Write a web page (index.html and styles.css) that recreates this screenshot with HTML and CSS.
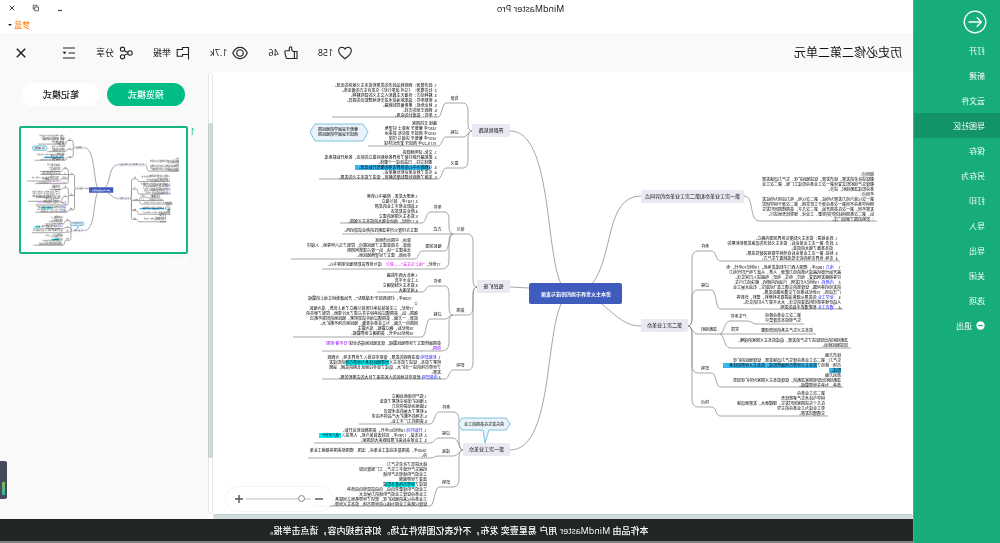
FILE: index.html
```html
<!DOCTYPE html>
<html lang="zh-CN">
<head>
<meta charset="utf-8">
<title>MindMaster Pro</title>
<link rel="stylesheet" href="styles.css">
</head>
<body>
<div class="app">
  <nav class="sidebar">
    <button class="back" aria-label="返回">
      <svg viewBox="0 0 24 24"><circle cx="12" cy="12" r="10.8"/><path d="M18.5 12H6M10.3 7.3 5.6 12l4.7 4.7"/></svg>
    </button>
    <a class="item" href="#">打开</a>
    <a class="item" href="#">新建</a>
    <a class="item" href="#">云文件</a>
    <a class="item active" href="#">导图社区</a>
    <a class="item" href="#">保存</a>
    <a class="item" href="#">另存为</a>
    <a class="item" href="#">打印</a>
    <a class="item" href="#">导入</a>
    <a class="item" href="#">导出</a>
    <a class="item" href="#">关闭</a>
    <a class="item" href="#">选项</a>
    <a class="item" href="#"><svg class="exit" viewBox="0 0 10 10"><circle cx="5" cy="5" r="4.6" fill="#fff"/><path d="M2.4 5h5.2" stroke="#17ad78" stroke-width="1.4"/></svg>退出</a>
  </nav>

  <div class="main">
    <div class="titlebar">
      <h1 class="app-name">MindMaster Pro</h1>
      <div class="window">
        <div class="window-buttons">
          <button aria-label="最小化"><svg viewBox="0 0 8 8"><path d="M2 6.5h4" stroke-width="1.2"/></svg></button>
          <button aria-label="还原"><svg viewBox="0 0 8 8"><path d="M1.5 3h3.8v3.8H1.5zM3 3V1.3h3.8v3.9H5.3" stroke-width=".8"/></svg></button>
          <button aria-label="关闭窗口"><svg viewBox="0 0 8 8"><path d="m1.7 1.7 4.6 4.6m0-4.6L1.7 6.3" stroke-width="1"/></svg></button>
        </div>
        <button class="account">梦蓝<span class="caret"></span></button>
      </div>
    </div>

    <header class="header">
      <h2 class="doc-title">历史必修二第二单元</h2>
      <div class="stats">
        <button class="tool"><svg viewBox="0 0 14 14"><path d="M7 12.7C4.6 11 .7 8 .7 4.8.7 2.700 2.200 1.200 4 1.200c1.300 0 2.400.7 3 1.900.6-1.200 1.700-1.900 3-1.900 1.800 0 3.300 1.500 3.300 3.600C13.300 8 9.400 11 7 12.700z"/></svg>158</button>
        <button class="tool"><svg viewBox="0 0 14 14"><path d="M1 5.500h2.600v7H1zM3.600 6l2.600-1.500V2c0-1.600 2.500-1.500 2.500.3v2.500h3.400c.9 0 1.300.7 1.100 1.500l-1.300 5.200c-.2.700-.7 1-1.300 1h-7"/></svg>46</button>
        <button class="tool"><svg class="eye" viewBox="0 0 16 14"><path d="M.7 7C4.300-.5 11.700-.5 15.300 7 11.700 14.500 4.300 14.500.7 7z"/><circle cx="8" cy="7" r="3.200"/></svg>1.7k</button>
      </div>
      <div class="actions">
        <button class="tool"><svg viewBox="0 0 14 14"><path d="M1.500 13.500V1.500h6v2h5.300v6.800H7.500V8.500h-6"/></svg>举报</button>
        <button class="tool"><svg viewBox="0 0 14 14"><circle cx="3" cy="7" r="2.200"/><circle cx="10.500" cy="3.200" r="2.100"/><circle cx="10.500" cy="10.800" r="2.100"/><path d="M5 6c1.500.2 2.700-.4 3.700-1.600M5 8c1.500-.2 2.700.4 3.700 1.600"/></svg>分享</button>
        <button class="tool" aria-label="目录"><svg viewBox="0 0 14 14"><path d="M1 2h12M1 7h6.500M1 12h12"/><path d="m9.500 5.700h4L11.500 8.300z" fill="#222" stroke="none"/></svg></button>
        <button class="tool close" aria-label="关闭"><svg viewBox="0 0 10 10"><path d="m.8.8 8.400 8.400m0-8.400L.8 9.200" stroke-width="1.500"/></svg></button>
      </div>
    </header>

    <div class="content">
      <section class="viewer">
        <svg class="canvas" id="canvas" viewBox="87 72 700 442" preserveAspectRatio="xMidYMid meet"><g id="map"></g></svg>
        <div class="zoom">
          <button aria-label="缩小"><svg viewBox="0 0 8 8"><path d="M0 4h8"/></svg></button>
          <input type="range" aria-label="缩放" min="0" max="100" value="12">
          <button aria-label="放大"><svg viewBox="0 0 8 8"><path d="M0 4h8M4 0v8"/></svg></button>
        </div>
        <div class="hscroll"></div>
      </section>
      <div class="vscroll"><div class="vthumb"></div></div>
      <aside class="panel">
        <div class="tabs">
          <button class="tab on">预览模式</button>
          <button class="tab">笔记模式</button>
        </div>
        <div class="page">
          <span class="num">1</span>
          <div class="thumb">
            <svg viewBox="98 55 635 477"><use href="#map"/></svg>
            <span class="page-name">Page-1</span>
          </div>
        </div>
        <div class="meter"><span></span></div>
      </aside>
    </div>

    <footer class="footer">本作品由 MindMaster 用户 易星壹奕 发布，不代表亿图软件立场。如有违规内容，请点击举报。</footer>
  </div>
</div>
<script src="map.js"></script>
</body>
</html>
```

FILE: styles.css
```css
* { box-sizing: border-box; }
body {
  margin: 0;
  background: #fff;
  color: #111;
  font-family: "Open Sans", "Noto Sans CJK SC", sans-serif;
  font-size: 9px;
}
button, input { font: inherit; color: inherit; }
button { border: 0; padding: 0; background: none; display: flex; align-items: center; cursor: pointer; }
svg { display: block; }
h1, h2 { margin: 0; font-weight: 400; }

/* The whole window is shown mirrored. */
.app { display: flex; height: 100vh; transform: scaleX(-1); overflow: hidden; }

.sidebar { flex: 0 0 87px; background: #17ad78; color: #fff; font-size: 8px; border-right: 1px solid #36b98b; }
.back { margin: 10px 0 4px 13px; }
.back svg { width: 24px; height: 24px; fill: none; stroke: #fff; stroke-width: 1.3; }
.item { display: flex; align-items: center; gap: 4px; height: 25px; padding-left: 15px; color: #fff; text-decoration: none; }
.item.active { background: #139466; }
.exit { width: 9px; height: 9px; }

.main { flex: 1; min-width: 0; display: flex; flex-direction: column; }
.titlebar { display: flex; justify-content: space-between; height: 33px; padding-right: 8px; }
.app-name { flex: 1; padding: 3px 140px 0 0; font-size: 9px; line-height: 12px; text-align: center; }
.window { width: 56px; display: flex; flex-direction: column; align-items: flex-end; margin-left: -56px; }
.window-buttons { display: flex; gap: 16px; height: 16px; }
.window-buttons svg { width: 8px; height: 8px; fill: none; stroke: #444; }
.account { gap: 2px; padding-top: 2px; color: #ff8a1e; font-size: 8px; font-weight: 500; line-height: 16px; }
.caret { border: 2px solid transparent; border-top-color: #222; border-bottom: 0; }

.header { display: flex; align-items: center; height: 39px; padding: 0 16px 0 11px; background: #f9f9f9; }
.doc-title { flex: 1; font-size: 12px; line-height: 16px; }
.stats { display: flex; gap: 20px; margin-right: 20px; }
.actions { display: flex; gap: 20px; }
.tool { gap: 5px; line-height: 14px; }
.tool svg { width: 14px; height: 14px; fill: none; stroke: #222; stroke-width: 1.1; }
.tool .eye { width: 16px; }
.close { margin-left: 16px; }
.close svg { width: 10px; height: 10px; }

.content { flex: 1; min-height: 0; display: flex; }
.viewer { position: relative; flex: 1; min-width: 0; display: flex; flex-direction: column; background: #fff; }
.canvas { flex: 1; min-height: 0; width: 100%; }
.hscroll { height: 5px; background: #d3dcdd; border-top: 1px solid #c3cecf; border-radius: 2px; }
.vscroll { width: 5px; background: #fff; border: 1px solid #e6e8e8; border-radius: 3px; padding-top: 50px; margin-bottom: 5px; }
.vthumb { height: 86%; margin: 0 -1px; background: #d0dadc; border: 1px solid #c3cecf; border-radius: 3px; }
.zoom {
  position: absolute; right: 13px; bottom: 8px; display: flex; align-items: center; justify-content: space-between;
  width: 106px; height: 24px; padding: 0 9px; border-radius: 12px;
  background: rgba(255, 255, 255, .85); box-shadow: 0 0 2px rgba(0, 0, 0, .15);
}
.zoom svg { width: 8px; height: 8px; stroke: #555; stroke-width: 1.4; }
.zoom input { width: 65px; height: 8px; margin: 0; appearance: none; background: none; }
.zoom input::-webkit-slider-runnable-track { height: 2px; background: #ddd; }
.zoom input::-webkit-slider-thumb { appearance: none; width: 7px; height: 7px; margin-top: -3px; border: 1px solid #888; border-radius: 50%; background: #fff; }

.panel { position: relative; flex: 0 0 208px; background: #f9f9f9; padding: 11px 19px 0 13px; }
.tabs { display: flex; justify-content: flex-end; gap: 7px; padding-right: 3px; }
.tab { width: 78px; height: 23px; justify-content: center; border-radius: 12px; background: #fff; font-weight: 500; }
.tab.on { background: #00bd86; color: #fff; }
.page { display: flex; gap: 1px; margin-top: 20px; color: #00bd86; }
.num { width: 6px; line-height: 12px; }
.thumb { flex: 1; }
.thumb svg { width: 100%; border: 2px solid #12b783; border-radius: 2px; background: #fff; }
.page-name { display: block; line-height: 14px; color: #fff; }
.meter { position: absolute; right: 0; bottom: 20px; width: 7px; height: 38px; border-radius: 2px 0 0 2px; background: #454a5c; padding: 21px 2px 4px; }
.meter span { display: block; height: 13px; background: linear-gradient(#8ab84e, #2fb4a0); }

.footer { height: 24px; border-bottom: 2px solid #7e8583; background: #212526; color: #fff; font-weight: 500; text-align: center; line-height: 23px; }

/* Mind map */
#map text { font-family: "Open Sans", "Noto Sans CJK SC", sans-serif; font-size: 4px; fill: #000; white-space: pre; }
#map .link { fill: none; stroke: #8f8f8f; stroke-width: .8px; vector-effect: non-scaling-stroke; }
#map .node { fill: #e9e9f3; }
#map .topic { font-size: 5px; text-anchor: middle; }
#map .root { fill: #3f5bbc; }
#map .root-text { font-size: 5px; font-weight: 700; fill: #fff; text-anchor: middle; }
#map .label { text-anchor: middle; }
#map .note { fill: #eaf3fb; stroke: #7cc3e0; stroke-width: 1px; vector-effect: non-scaling-stroke; }
#map .b { fill: #2222ff; }
#map .m { fill: #e000f0; }
#map .p { fill: #8a00ff; }
#map .sky { fill: #37b8ee; }
#map .cyan { fill: #00f0f5; }
```

FILE: map.js
```js
const NS = "http://www.w3.org/2000/svg";
const map = document.getElementById("map");

function add(tag, attrs, parent) {
  const el = document.createElementNS(NS, tag);
  for (const key in attrs) el.setAttribute(key, attrs[key]);
  (parent || map).appendChild(el);
  return el;
}
const link = d => add("path", { class: "link", d });
const mark = (cls, x, y, width) => add("rect", { class: cls, x, y: y - 4, width, height: 5 });

// Coloured words are written as [b:word].
function block(x, y, lines) {
  lines.forEach((line, i) => {
    const t = add("text", { x, y: y + i * 5 });
    line.split(/(\[\w:[^\]]+\])/).forEach(part => {
      const m = part.match(/^\[(\w):(.+)\]$/);
      const span = add("tspan", m ? { class: m[1] } : {}, t);
      span.textContent = m ? m[2] : part;
    });
  });
}
function node(x, y, w, text) {
  add("rect", { class: "node", x, y, width: w, height: 13, rx: 1 });
  add("text", { class: "topic", x: x + w / 2, y: y + 8 }).textContent = text;
}
function label(x, y, text) {
  add("text", { class: "label", x, y: y - 3 }).textContent = text;
}
// Rounded elbow from a hub to the start of a branch line.
function elbow(hx, hy, x, y) {
  const d = Math.sign(x - hx), v = Math.sign(y - hy), m = hx + d * 4;
  if (Math.abs(y - hy) < 18) return `M${hx},${hy}C${m},${hy} ${m},${y} ${x},${y}`;
  return `M${hx},${hy}Q${m},${hy} ${m},${hy + v * 8}V${y - v * 8}Q${m},${y} ${x},${y}`;
}
function branch(hub, x1, x2, y, text, leaf) {
  let d = elbow(hub[0], hub[1], x1, y) + `H${x2}`;
  if (leaf) {
    const [x3, yb, x4] = leaf, mid = (x2 + x3) / 2;
    d += `C${mid},${y} ${mid},${yb} ${x3},${yb}H${x4}`;
  }
  link(d);
  if (text) label((x1 + x2) / 2, y, text);
}

// Trunk links
link("M439,284C455,250 448,131 490,131");
link("M471,288L490,287");
link("M439,304C455,340 448,450 490,450");
link("M408,284C386,256 395,196 359,196");
link("M398,304C380,320 372,326 359,326");

add("rect", { class: "root", x: 378, y: 283, width: 93, height: 21, rx: 2 });
add("text", { class: "root-text", x: 424, y: 296 }).textContent = "资本主义世界市场的形成与发展";

// New sea routes
node(490, 124, 38, "开辟新航路");
let hub = [528, 131];
branch(hub, 537, 554, 103, "背景", [562, 117, 668]);
block(563, 87, [
  "1. 经济根源：西欧商品经济的发展和资本主义萌芽的出现。",
  "2. 社会根源：《马可·波罗行纪》引发对东方的黄金热。",
  "3. 精神动力：传播天主教和人文主义的冒险精神。",
  "4. 客观条件：造船航海技术进步和地理知识的提高。",
  "5. 商业危机：奥斯曼控制商路。",
  "6. 西欧王室的支持。",
  "7. 条件：指南针的应用。"]);
branch(hub, 537, 554, 137, "过程", [562, 146, 632]);
block(563, 125, [
  "路线 支持国家",
  "1487年 葡萄牙 迪亚士 好望角",
  "1492年 西班牙 哥伦布 到美洲",
  "1497年 葡萄牙 达伽马 印度",
  "1519-22年 西班牙 麦哲伦环球"]);
branch(hub, 537, 554, 168, "意义", [562, 179, 681]);
mark("sky", 570, 169, 75);
block(563, 154, [
  "1. 文化: 证明地圆说",
  "2. 新航路开辟打破了世界各地相对孤立的状态，各地开始联系成",
  "　 整体交往，日益连成一个整体。",
  "3. 以西欧为中心的世界市场的雏形开始出现。",
  "4. 引发了商业革命和价格革命。",
  "5. 加速了西欧封建制度的解体，促进了资本主义的发展。"]);
add("path", { class: "note", d: "M632,132L637,124H685L690,132L685,141H637Z" });
block(642, 131, ["葡萄牙是最早的殖民国", "西班牙是最早的殖民国"]);

// Colonial expansion
node(490, 280, 33, "殖民扩张");
hub = [523, 287];
branch(hub, 532, 547, 234, "荷兰");
branch(hub, 532, 547, 315, "英国");
branch(hub, 532, 547, 370, "影响", [555, 379, 678]);
let sub = [547, 234];
branch(sub, 555, 570, 212, "条件", [578, 223, 660]);
block(582, 198, [
  "1.地理大发现，商路中心转移",
  "2.1581年，荷兰独立",
  "3.造船业和手工业的发展",
  "4.商业贸易发达",
  "5.资本主义国家的建立",
  "6.17世纪，海运业强大的资本主义强国。"]);
branch(sub, 555, 570, 234, "方式", [578, 234, 658]);
block(582, 232, ["建立东印度公司等垄断性的商业贸易机构。"]);
branch(sub, 555, 578, 251, "殖民范围", [585, 259, 709]);
block(589, 242, [
  "亚洲，中国台湾地区",
  "南亚、东南亚建立了殖民据点，控制了马六甲等地，入侵印",
  "北美建立一块，后一度占领新阿姆斯",
  "非洲南，建立了好望角殖民地。"]);
branch(sub, 559, 570, 269, "", [578, 269, 678]);
block(559, 266, ["17世纪，[m:“海上马车夫”——荷兰]　成为世界贸易和殖民帝国中心。"]);
sub = [547, 315];
branch(sub, 555, 570, 286, "条件", [578, 292, 623]);
block(582, 277, ["1.地处大西洋航路", "2.工业水平高", "3.资本主义制度确立", "4.海军强大"]);
branch(sub, 555, 570, 319, "过程", [578, 337, 707]);
block(588, 300, ["1588年，打败西班牙“无敌舰队”，开始逐渐树立海上的霸权"]);
block(582, 305, [
  "②",
  "　17世纪，三次英荷战争打败荷兰确立了海上优势，成为殖民",
  "强国。后，英国通过战争掠夺并占领了大片领地，控制了更多的",
  "资源，一方面，英国通过海外贸易积累，殖民地的财富不断流",
  "回国内一方面，为工业革命准备，殖民地市场不断扩大。",
  "　18世纪后，确立霸权，成为霸主",
  "　18世纪60年代，英国确立世界霸权。"]);
branch(sub, 559, 570, 351, "", [578, 351, 678]);
block(559, 345, ["英国最终建立了世界殖民霸权，使其殖民地遍布全球[p:“日不落”帝国]", "[p:帝国。]"]);
mark("cyan", 611, 364, 43);
block(559, 359, [
  "1. [b:积极影响:]促进西欧的发展，使亚非拉卷入了世界市场，为西欧",
  "积累了资本，促进了资本主义世界殖民体系与世界市场的形成发",
  "了世界市场的进一步扩大，造成了亚非拉地区长期的贫困，是欧",
  "发展。",
  "2.[b:消极影响:]给亚非拉地区的人民带来了巨大的灾难和苦难。"]);

// First industrial revolution
node(490, 443, 47, "第一次工业革命");
hub = [537, 450];
branch(hub, 547, 561, 412, "条件", [570, 424, 641]);
block(573, 398, [
  "1.资产阶级统治确立",
  "2.殖民扩张掠夺积累了资金",
  "3.圈地运动提供劳力",
  "4.积累了大量的技术知识",
  "5.市场的不断扩大产品供不应求",
  "6.英国的工厂手工业。"]);
branch(hub, 547, 561, 438, "过程", [570, 443, 686]);
mark("cyan", 659, 437, 22);
block(573, 432, [
  "1. [b:开始时间:]18世纪60年代，英国棉纺织业开始，",
  "2. 标志是，1785年，瓦特改良蒸汽机，人类进入 “蒸汽时代”",
  "3. 工业革命后来扩展到欧美大陆国家。"]);
branch(hub, 547, 561, 456, "成就", [570, 458, 692]);
block(573, 452, ["1840年，英国基本完成工业革命，法国、德国和美国等相继工业革", "命。"]);
branch(hub, 547, 561, 487, "影响", [570, 506, 685]);
mark("cyan", 585, 486, 30);
block(573, 466, [
  "极大提高了社会生产力",
  "机器生产代替手工生产，工厂制度出现",
  "工业资产阶级和无产阶级",
  "改变了世界面貌",
  "促成了世界市场基本形成",
  "工业资产阶级要求自由，自由贸易和自由竞争",
  "工业革命促使工业资产阶级的力量壮大",
  "工业革命以来的殖民扩张，密切了世界各地之间联系",
  "促使以欧美工业国为核心的世界市场，资本主义世界。"]);
add("path", { class: "note", d: "M490,424L494,418H538L542,424L538,430H517L515,443L511,430H494Z" });
block(496, 426, ["首先发生在英国的工业"]);

// Comparison of both revolutions
node(256, 190, 103, "第一次工业革命和第二次工业革命的异同点");
link("M256,196C245,196 252,221 240,221H123");
block(126, 176, [
  "相同点：",
  "都促进社会的发展，经济发展，促进殖民扩张，生产力迅速发展",
  "都使生产组织形式变化第一次工业革命形成工厂制、第二次工业",
  "革命形成垄断组织，进步。",
  "不同点：",
  "第一次以蒸汽动力发展为特征，第二次以电，电力应用为特征发",
  "明科学革命不同第一次革命源于工匠实践，第二次源于科学研究",
  "发展不同，第一次在英国开始，第二次几乎，英国德国同时发生",
  "后，第二次各国科技同时的重要，工业化，轻重结合地进行。",
  "：影响范围了更加广泛。"]);

// Second industrial revolution
node(312, 319, 47, "第二次工业革命");
hub = [312, 326];
branch(hub, 302, 288, 251, "条件", [280, 261, 160]);
block(162, 240, [
  "1. 政治前提：资本主义制度在世界范围内确立。",
  "2. 经济: 第一次工业革命后，资本主义经济的迅速发展和积累的",
  "　 资本准备了强大的资金。",
  "3. 科技: 第一次工业革命后自然科学取得突破性进展。",
  "4. 市场: 世界市场的初步形成刺激了生产力。"]);
branch(hub, 302, 288, 290, "过程", [280, 309, 157]);
block(159, 269, [
  "1.　[b:电力] 1866年，德国人西门子制成发电机，19世纪70年代，电",
  "器开始代替机器成为新的动力能源，人类，从此了电气时代电力",
  "灯等相继发明改变，电灯，电车，电影，电器进入日常生活。",
  "2.　[b:内燃机:] 19世纪人们发明，汽油机内燃机，解决动力汽车",
  "的发动机等问题，促使新的交通工具飞机诞生，石油大量工业",
  "广泛应用。19世纪后推动了交通运输的发展。",
  "3.　[b:化学工业] 的发展从煤焦油提取多种原料，塑料，炸药等",
  "人造纤维等新材料改变的生活，大大丰富了人们的生活。",
  "4.　[b:通讯工业] 和新通讯手段的发明"]);
branch(hub, 302, 280, 334, "垄断组织");
sub = [280, 334];
branch(sub, 270, 253, 321, "产生条件", [243, 324, 196]);
block(199, 317, ["第二次工业革命推动", "生产和资本高度集中"]);
branch(sub, 270, 260, 334, "实质", [250, 334, 184]);
block(187, 332, ["资本主义生产关系的局部调整"]);
branch(sub, 270, 260, 348, "", [250, 348, 149]);
block(152, 342, ["垄断组织的出现促进了生产的发展，造成资本主义国家的侵略，", "加深殖民统治。"]);
branch(hub, 302, 288, 373, "影响", [280, 387, 157]);
mark("sky", 183, 367, 94);
mark("sky", 159, 372, 12);
block(159, 357, [
  "经济方面",
  "生产力：第二次工业革命使生产力迅速发展，促使殖民的扩张",
  "市场：推动了资本主义世界市场最终形成，资本主义世界的体系",
  "形成。",
  "政治方面",
  "垄断组织出现和国家垄断的，促使资本主义国家对外扩张加重",
  "竞争，为争夺世界霸权。"]);
branch(hub, 302, 288, 407, "特点", [280, 416, 172]);
block(175, 395, [
  "第二次工业革命",
  "科学与技术生产紧密结合",
  "在几个先进国家同时发生，规模更大，发展更迅速",
  "重工业成为工业革命的主导",
  "交通通讯发展。"]);
```
